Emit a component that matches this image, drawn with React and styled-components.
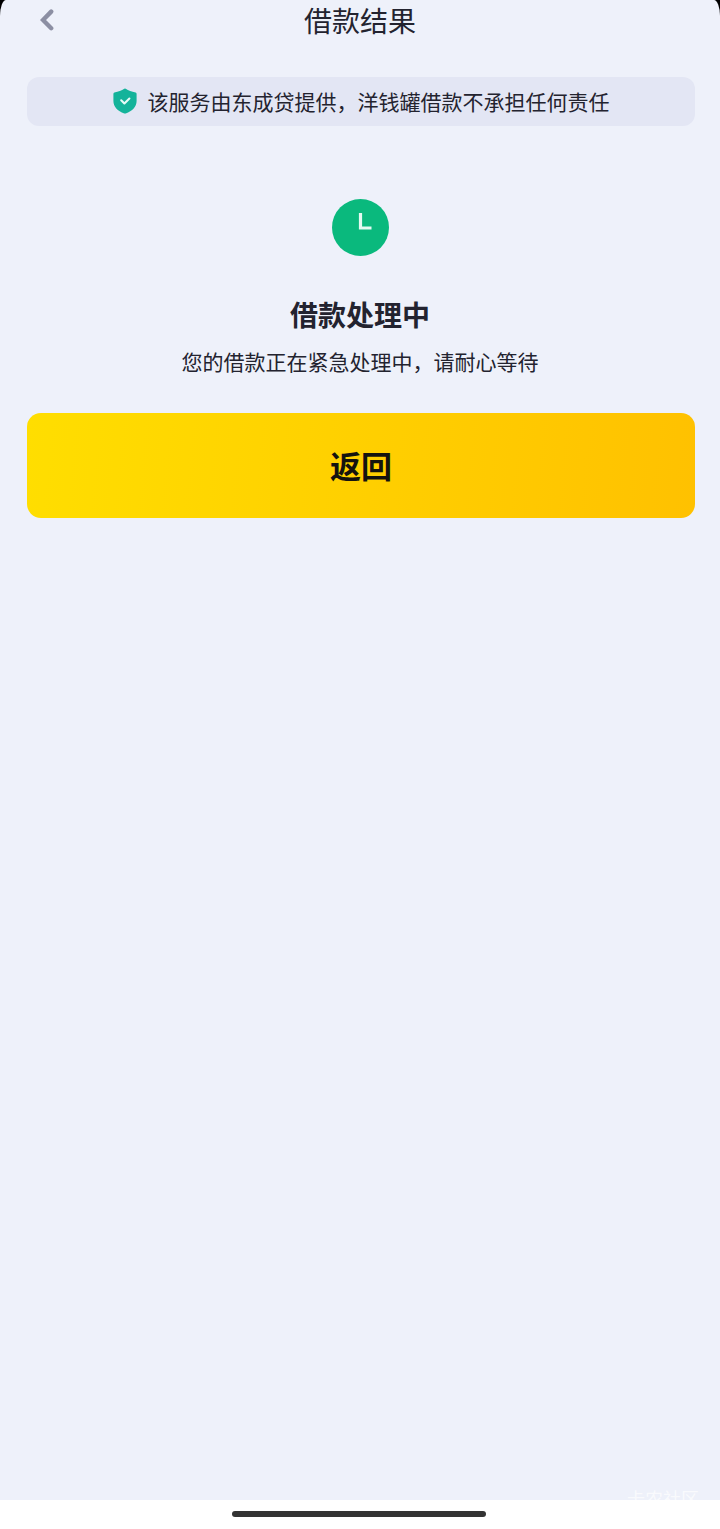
import React from 'react';
import styled, {createGlobalStyle} from 'styled-components';

const GlobalStyle = createGlobalStyle`
    * {
        box-sizing: border-box;
    }

    body {
        margin: 0;
        background: #000;
        color: #23232f;
        font-family: "Noto Sans CJK SC", sans-serif;
    }
`;

const Page = styled.div`
    display: flex;
    flex-direction: column;
    min-height: 100vh;
    background: #eef1fa;
    border-radius: 6px 6px 0 0 / 16px 16px 0 0;
    overflow: hidden;
`;

const Header = styled.header`
    display: grid;
    grid-template-columns: 42px 1fr 42px;
    align-items: center;
    height: 40px;
    padding: 0 26px;
`;

const BackButton = styled.button`
    display: flex;
    align-items: center;
    justify-content: center;
    height: 40px;
    padding: 0;
    border: none;
    background: none;
    cursor: pointer;
`;

const Title = styled.h1`
    margin: 0;
    font-size: 28px;
    font-weight: 400;
    line-height: 40px;
    text-align: center;
`;

const Main = styled.main`
    flex: 1;
    display: flex;
    flex-direction: column;
    padding: 37px 25px 0 27px;
`;

const Notice = styled.div`
    display: flex;
    align-items: center;
    justify-content: center;
    gap: 11px;
    min-height: 49px;
    padding-bottom: 2px;
    border-radius: 12px;
    background: #e3e6f4;
    font-size: 21px;
    line-height: 32px;
`;

const Result = styled.section`
    display: flex;
    flex-direction: column;
    align-items: center;
    padding: 73px 2px 36px 0;
`;

const ResultTitle = styled.h2`
    margin: 38px 0 11px;
    font-size: 28px;
    font-weight: 700;
    line-height: 40px;
`;

const ResultText = styled.p`
    margin: 0;
    font-size: 21px;
    line-height: 32px;
`;

const PrimaryButton = styled.button`
    width: 100%;
    height: 105px;
    padding: 0 0 2px;
    border: none;
    border-radius: 14px;
    background: linear-gradient(95deg, #ffde00, #ffc100);
    color: #14130f;
    font-family: inherit;
    font-size: 31px;
    font-weight: 700;
    cursor: pointer;
`;

const HomeBar = styled.footer`
    position: relative;
    display: flex;
    align-items: center;
    justify-content: center;
    height: 29px;
    padding: 0 3px 2px 0;
    background: #fff;
`;

const HomeIndicator = styled.div`
    width: 254px;
    height: 6px;
    border-radius: 3px;
    background: #333;
`;

const Watermark = styled.span`
    position: absolute;
    right: 21px;
    bottom: 18px;
    color: #fff;
    font-size: 18px;
    line-height: 26px;
    opacity: 0.7;
`;

function BackIcon() {
    return (
        <svg width="14" height="22" viewBox="0 0 14 22" fill="none" aria-hidden="true">
            <path d="M11.200 2.600L3 11l8.200 8.200" stroke="#8c8fa3" strokeWidth="4.400" strokeLinecap="round"/>
        </svg>
    );
}

function ShieldIcon() {
    return (
        <svg width="24" height="26" viewBox="0 0 24 26" fill="none" aria-hidden="true">
            <path
                d="M11.300.700Q12 .3 12.700.700C15.500 2.400 18.500 3.600 22.600 4.600Q23.600 4.900 23.600 5.900V13C23.600 18.600 19.500 23 12.700 25.400Q12 25.700 11.300 25.400C4.500 23 .4 18.600.4 13V5.900Q.4 4.900 1.400 4.600C5.500 3.600 8.500 2.400 11.300.700Z"
                fill="#14b39a"
            />
            <path d="M8.200 12.300l3.200 3.200 5-4.900" stroke="#e6fbf7" strokeWidth="2.100" strokeLinecap="round" strokeLinejoin="round"/>
        </svg>
    );
}

function ClockIcon() {
    return (
        <svg width="57" height="57" viewBox="0 0 57 57" fill="none" aria-hidden="true">
            <circle cx="28.5" cy="28.5" r="28.500" fill="#0ab97d"/>
            <path d="M28.500 14v15H39.500" stroke="#e4faf1" strokeWidth="3.200"/>
        </svg>
    );
}

function App() {
    return (
        <>
            <GlobalStyle/>
            <Page>
                <Header>
                    <BackButton type="button" aria-label="返回上一页">
                        <BackIcon/>
                    </BackButton>
                    <Title>借款结果</Title>
                </Header>
                <Main>
                    <Notice>
                        <ShieldIcon/>
                        <span>该服务由东成贷提供，洋钱罐借款不承担任何责任</span>
                    </Notice>
                    <Result>
                        <ClockIcon/>
                        <ResultTitle>借款处理中</ResultTitle>
                        <ResultText>您的借款正在紧急处理中，请耐心等待</ResultText>
                    </Result>
                    <PrimaryButton type="button">返回</PrimaryButton>
                </Main>
                <HomeBar>
                    <Watermark>卡农社区</Watermark>
                    <HomeIndicator/>
                </HomeBar>
            </Page>
        </>
    );
}

export default App;
